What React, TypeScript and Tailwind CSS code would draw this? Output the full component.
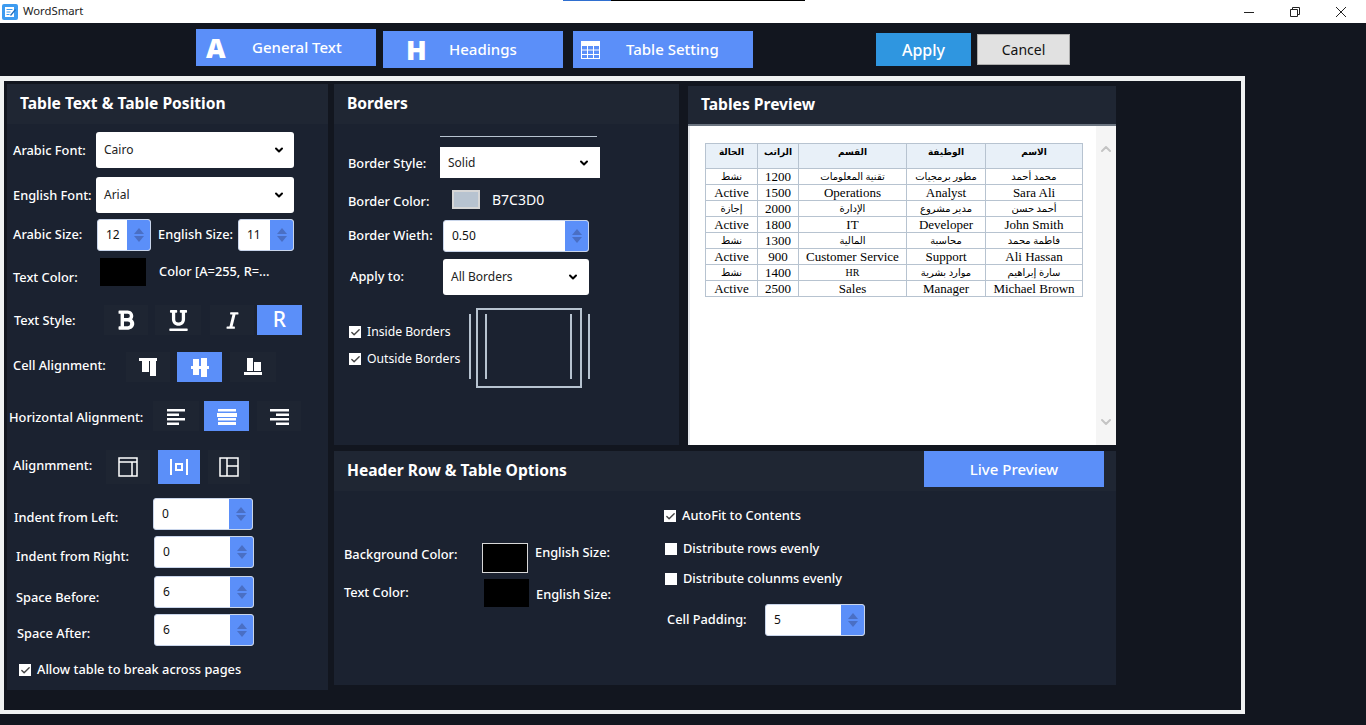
import type { ReactNode } from "react";
import { Check, ChevronDown, ChevronUp } from "lucide-react";
import { FaBold, FaItalic, FaUnderline } from "react-icons/fa";

const ROWS = [
  ["نشط", "1200", "تقنية المعلومات", "مطور برمجيات", "محمد أحمد"],
  ["Active", "1500", "Operations", "Analyst", "Sara Ali"],
  ["إجازة", "2000", "الإدارة", "مدير مشروع", "أحمد حسن"],
  ["Active", "1800", "IT", "Developer", "John Smith"],
  ["نشط", "1300", "المالية", "محاسبة", "فاطمة محمد"],
  ["Active", "900", "Customer Service", "Support", "Ali Hassan"],
  ["نشط", "1400", "HR", "موارد بشرية", "سارة إبراهيم"],
  ["Active", "2500", "Sales", "Manager", "Michael Brown"],
];

const HEAD = ["الحالة", "الراتب", "القسم", "الوظيفة", "الاسم"];

function Spin({ value, className }: { value: string; className: string }) {
  return (
    <div className={`flex h-[32px] overflow-hidden rounded-[3px] border border-[#c9d5ea] bg-white text-[12px] font-normal text-[#111] ${className}`}>
      <span className="flex-1 pl-[8px] pt-[6px]">{value}</span>
      <span className="flex w-[23px] flex-col items-center justify-center gap-[2px] bg-[#5b8ff9]">
        <span className="h-0 w-0 border-x-[5px] border-b-[6px] border-x-transparent border-b-[#4a6fc4]" />
        <span className="h-0 w-0 border-x-[5px] border-t-[6px] border-x-transparent border-t-[#4a6fc4]" />
      </span>
    </div>
  );
}

function Select({ value, className }: { value: string; className: string }) {
  return (
    <div className={`flex items-center justify-between bg-white text-[12px] font-normal text-[#222] ${className}`}>
      <span>{value}</span>
      <ChevronDown size={12} strokeWidth={4} className="text-black" />
    </div>
  );
}

function Box({ checked }: { checked?: boolean }) {
  return (
    <span className="flex h-[12px] w-[12px] shrink-0 items-center justify-center bg-white">
      {checked && <Check size={11} strokeWidth={3} className="text-[#444]" />}
    </span>
  );
}

function Tool({ active, className, children }: { active?: boolean; className: string; children: ReactNode }) {
  return (
    <div className={`flex h-full items-center justify-center text-white ${active ? "bg-[#5b8ff9]" : "bg-[#1e2532]"} ${className}`}>
      {children}
    </div>
  );
}

function Glyph({ children, size = 20 }: { children: ReactNode; size?: number }) {
  return (
    <svg width={size} height={size} viewBox="0 0 20 20" fill="white">
      {children}
    </svg>
  );
}

function PanelHead({ title, className = "" }: { title: string; className?: string }) {
  return (
    <div className={`flex h-[40px] items-center bg-[#1f2633] text-[15.6px] font-bold text-white ${className}`}>{title}</div>
  );
}

export default function App() {
  return (
    <div
      className="relative h-[725px] w-[1366px] overflow-hidden bg-[#12161f] text-[12.8px] font-medium text-white"
      style={{ fontFamily: '"Noto Sans", "Open Sans", "DejaVu Sans", sans-serif' }}
    >
      <div className="absolute left-[563px] top-0 flex h-[1px] w-[242px]">
        <span className="w-[48px] bg-[#2f6fd0]" />
        <span className="flex-1 bg-black" />
      </div>

      {/* Title bar */}
      <div className="flex h-[23px] items-center bg-white pl-[2px] text-[11.3px] font-normal text-[#222]">
        <svg width="16" height="16" viewBox="0 0 16 16">
          <rect width="16" height="16" rx="2" fill="#3d9bf0" />
          <rect x="3" y="3" width="9" height="10" fill="white" />
          <path d="M4.5 5.5h6M4.5 8h4M4.5 10.500h3" stroke="#3d9bf0" strokeWidth="1" />
          <path d="M8 11l5-6 1 1-5 6z" fill="#1f6fc0" />
        </svg>
        <span className="ml-[5px]">WordSmart</span>
        <div className="ml-auto flex items-center pr-[20px]">
          <svg width="10" height="10" viewBox="0 0 10 10" stroke="#222" fill="none">
            <path d="M0 5.500h10" />
          </svg>
          <svg className="ml-[36px]" width="10" height="10" viewBox="0 0 10 10" stroke="#222" fill="none">
            <path d="M.5 2.500h7v7h-7zM2.500 2.500v-2h7v7h-2" />
          </svg>
          <svg className="ml-[36px]" width="10" height="10" viewBox="0 0 10 10" stroke="#222" fill="none">
            <path d="M0 0l10 10M10 0L0 10" />
          </svg>
        </div>
      </div>

      {/* Tabs */}
      <div className="flex h-[53px] items-start pl-[196px] text-[15px]">
        <div className="mt-[6px] flex h-[37px] w-[180px] items-center bg-[#5b8ff9]">
          <span className="ml-[10px] w-[46px] text-[27px] font-black leading-none">A</span>
          <span>General Text</span>
        </div>
        <div className="ml-[7px] mt-[8px] flex h-[37px] w-[180px] items-center bg-[#5b8ff9]">
          <span className="ml-[23px] w-[43px] text-[27px] font-black leading-none">H</span>
          <span>Headings</span>
        </div>
        <div className="ml-[10px] mt-[8px] flex h-[37px] w-[180px] items-center bg-[#5b8ff9]">
          <svg className="ml-[8px]" width="19" height="18" viewBox="0 0 19 18" fill="none" stroke="white">
            <rect x=".5" y=".5" width="18" height="17" fill="#5b8ff9" />
            <rect x=".5" y=".5" width="18" height="4" fill="white" />
            <path d="M6.500 4v14M12.500 4v14M0 9h19M0 13.500h19" />
          </svg>
          <span className="ml-[26px]">Table Setting</span>
        </div>
        <div className="ml-[123px] mt-[10px] flex h-[33px] w-[95px] items-center justify-center bg-[#2f96e0] text-[16px]">Apply</div>
        <div className="ml-[6px] mt-[11px] flex h-[31px] w-[93px] items-center justify-center border border-[#adadad] bg-[#e1e1e1] text-[14px] font-normal text-[#111]">Cancel</div>
      </div>

      {/* Frame */}
      <div className="h-[638px] w-[1245px] border-x-[4px] border-b-[4px] border-t-[5px] border-[#f0f2f2] pl-[3px] pt-[3px]">
        <div className="flex gap-[6px]">
          {/* Table text panel */}
          <div className="h-[606px] w-[321px] bg-[#1b2230]">
            <PanelHead title="Table Text & Table Position" className="pl-[13px]" />
            <div className="mt-[8px] flex h-[36px] items-center pl-[6px]">
              <span className="w-[83px] pt-[2px]">Arabic Font:</span>
              <Select value="Cairo" className="h-full w-[198px] rounded-[3px] pl-[8px] pr-[9px] pb-[1px]" />
            </div>
            <div className="mt-[9px] flex h-[36px] items-center pl-[6px]">
              <span className="w-[83px] pt-[2px]">English Font:</span>
              <Select value="Arial" className="h-full w-[198px] rounded-[3px] pl-[8px] pr-[9px] pb-[1px]" />
            </div>
            <div className="mt-[6px] flex h-[32px] items-center whitespace-nowrap pl-[6px]">
              <span className="w-[84px]">Arabic Size:</span>
              <Spin value="12" className="w-[54px]" />
              <span className="ml-[7px] w-[80px]">English Size:</span>
              <Spin value="11" className="w-[56px]" />
            </div>
            <div className="mt-[7px] flex h-[28px] items-center pl-[6px]">
              <span className="w-[87px] pt-[12px]">Text Color:</span>
              <span className="h-full w-[46px] bg-black" />
              <span className="ml-[13px]">Color [A=255, R=...</span>
            </div>
            <div className="mt-[19px] flex h-[30px] items-center pl-[7px]">
              <span className="w-[90px] pt-[2px]">Text Style:</span>
              <Tool className="w-[44px]"><FaBold size={22} /></Tool>
              <Tool className="ml-[7px] w-[46px]"><FaUnderline size={21} /></Tool>
              <Tool className="ml-[9px] w-[44px]"><FaItalic size={19} /></Tool>
              <Tool active className="ml-[3px] w-[45px]"><span className="text-[21px]">R</span></Tool>
            </div>
            <div className="mt-[17px] flex h-[30px] items-center pl-[6px]">
              <span className="w-[113px] pb-[2px]">Cell Alignment:</span>
              <Tool className="w-[44px]">
                <Glyph><path d="M1 1h18v3h-1v15h-6V4h-1v11H4V4H1z" /></Glyph>
              </Tool>
              <Tool active className="ml-[7px] w-[45px]">
                <Glyph><path d="M3 2h6v7h2V1h6v8h2v3h-2v8h-6v-8H9v6H3v-6H1V9h2z" /></Glyph>
              </Tool>
              <Tool className="ml-[8px] w-[46px]">
                <Glyph><path d="M4 1h6v13H4zM11 5h7v9h-7zM1 15h18v3H1z" /></Glyph>
              </Tool>
            </div>
            <div className="mt-[19px] flex h-[30px] items-center pl-[2px]">
              <span className="w-[144px] pt-[4px]">Horizontal Alignment:</span>
              <Tool className="w-[46px]">
                <Glyph><path d="M1 3h18v2.500H1zM1 7.500h12V10H1zM1 12h18v2.500H1zM1 16.500h12V19H1z" /></Glyph>
              </Tool>
              <Tool active className="ml-[5px] w-[45px]">
                <Glyph><path d="M1 3h18v2.500H1zM0 7h20v4H0zM1 12h18v2.500H1zM1 16h18v3H1z" /></Glyph>
              </Tool>
              <Tool className="ml-[8px] w-[44px]">
                <Glyph><path d="M1 3h19v2.500H1zM7 7.500h13V10H7zM1 12h19v2.500H1zM7 16.500h13V19H7z" /></Glyph>
              </Tool>
            </div>
            <div className="mt-[19px] flex h-[34px] items-center pl-[6px]">
              <span className="w-[93px] pb-[3px]">Alignmment:</span>
              <Tool className="w-[44px]">
                <svg width="20" height="20" viewBox="0 0 20 20" fill="none" stroke="white" strokeWidth="1.500"><path d="M1 1h18v18H1zM1 5h18M14 5v14" /></svg>
              </Tool>
              <Tool active className="ml-[8px] w-[42px]">
                <svg width="20" height="20" viewBox="0 0 20 20" fill="none" stroke="white" strokeWidth="2"><path d="M2 2v16M18 2v16" /><rect x="7" y="7" width="6" height="6" /></svg>
              </Tool>
              <Tool className="ml-[8px] w-[42px]">
                <svg width="20" height="20" viewBox="0 0 20 20" fill="none" stroke="white" strokeWidth="1.500"><path d="M1 1h18v18H1zM8 1v18M8 9h11" /></svg>
              </Tool>
            </div>
            <div className="mt-[14px] flex h-[32px] items-center pl-[7px]">
              <span className="w-[139px] pt-[7px]">Indent from Left:</span>
              <Spin value="0" className="w-[100px]" />
            </div>
            <div className="mt-[6px] flex h-[32px] items-center pl-[9px]">
              <span className="w-[138px] pt-[10px]">Indent from Right:</span>
              <Spin value="0" className="w-[100px]" />
            </div>
            <div className="mt-[8px] flex h-[32px] items-center pl-[9px]">
              <span className="w-[138px] pt-[12px]">Space Before:</span>
              <Spin value="6" className="w-[100px]" />
            </div>
            <div className="mt-[6px] flex h-[32px] items-center pl-[10px]">
              <span className="w-[137px] pt-[8px]">Space After:</span>
              <Spin value="6" className="w-[100px]" />
            </div>
            <div className="mt-[15px] flex h-[18px] items-center gap-[6px] pl-[12px]">
              <Box checked />
              <span>Allow table to break across pages</span>
            </div>
          </div>

          <div className="w-[782px]">
            <div className="flex h-[361px] items-start">
              {/* Borders panel */}
              <div className="h-full w-[345px] bg-[#1b2230]">
                <PanelHead title="Borders" className="pl-[13px] font-bold" />
                <div className="ml-[106px] mt-[12px] h-[1px] w-[157px] bg-[#b7c3d0]" />
                <div className="mt-[10px] flex h-[31px] items-center pl-[14px]">
                  <span className="w-[92px] pt-[2px]">Border Style:</span>
                  <Select value="Solid" className="h-full w-[160px] pl-[8px] pr-[10px]" />
                </div>
                <div className="mt-[12px] flex h-[19px] items-center pl-[14px]">
                  <span className="w-[104px] pt-[4px]">Border Color:</span>
                  <span className="h-full w-[28px] border-2 border-[#d6d6d6] bg-[#b7c3d0]" />
                  <span className="ml-[12px] text-[14px] font-normal">B7C3D0</span>
                </div>
                <div className="mt-[11px] flex h-[32px] items-center pl-[14px]">
                  <span className="w-[95px]">Border Wieth:</span>
                  <Spin value="0.50" className="w-[146px]" />
                </div>
                <div className="mt-[7px] flex h-[36px] items-center pl-[16px]">
                  <span className="w-[93px]">Apply to:</span>
                  <Select value="All Borders" className="h-full w-[146px] rounded-[3px] pl-[8px] pr-[10px]" />
                </div>
                <div className="mt-[11px] flex pl-[15px]">
                  <div className="w-[119px] pt-[18px] text-[12.2px] font-normal">
                    <div className="flex h-[16px] items-center gap-[6px]"><Box checked />Inside Borders</div>
                    <div className="mt-[11px] flex h-[16px] items-center gap-[6px]"><Box checked />Outside Borders</div>
                  </div>
                  <svg width="124" height="84" viewBox="0 0 124 84" fill="none" stroke="#b7c3d0" strokeWidth="2">
                    <rect x="9" y="3" width="104" height="78" />
                    <path d="M2 8v65M18 8v65M103 8v65M121 8v65" />
                  </svg>
                </div>
              </div>

              {/* Preview panel */}
              <div className="ml-[9px] mt-[2px] h-[359px] w-[428px]">
                <div className="flex h-[40px] items-center border-b-2 border-[#6b7480] bg-[#1f2633] pl-[13px] text-[15.6px] font-bold">Tables Preview</div>
                <div className="flex h-[319px] border-l-2 border-[#e5e8ec] bg-white">
                  <div className="flex-1 pl-[15px] pt-[17px]">
                    <table
                      className="w-[377px] table-fixed border-collapse text-center text-[13px] font-normal leading-[15px] text-black"
                      style={{ fontFamily: '"Liberation Serif", "DejaVu Sans", serif' }}
                    >
                      <colgroup>
                        <col className="w-[52px]" />
                        <col className="w-[41px]" />
                        <col className="w-[108px]" />
                        <col className="w-[79px]" />
                        <col className="w-[97px]" />
                      </colgroup>
                      <thead>
                        <tr className="h-[25px] bg-[#e8f0f8]">
                          {HEAD.map((h) => (
                            <th key={h} className="border border-[#b7c3d0] pb-[7px] text-[9px] font-bold">{h}</th>
                          ))}
                        </tr>
                      </thead>
                      <tbody>
                        {ROWS.map((r, i) => (
                          <tr key={i} className="h-[16px]">
                            {r.map((c, j) => (
                              <td key={j} className={`border border-[#b7c3d0] p-0 whitespace-nowrap ${i % 2 === 0 && j !== 1 ? "text-[10px]" : ""}`}>{c}</td>
                            ))}
                          </tr>
                        ))}
                      </tbody>
                    </table>
                  </div>
                  <div className="flex w-[20px] flex-col items-center justify-between bg-[#f5f5f5] py-[15px] text-[#c4c4c4]">
                    <ChevronUp size={16} strokeWidth={3} />
                    <ChevronDown size={16} strokeWidth={3} />
                  </div>
                </div>
              </div>
            </div>

            {/* Header row options */}
            <div className="mt-[6px] h-[234px] bg-[#1b2230]">
              <div className="flex h-[40px] items-start bg-[#1f2633] pl-[13px] pt-[8px] text-[15.6px] font-bold">
                <span>Header Row & Table Options</span>
                <div className="ml-auto -mt-[8px] mr-[12px] flex h-[36px] w-[180px] items-center justify-center bg-[#5b8ff9] text-[15px] font-medium">Live Preview</div>
              </div>
              <div className="flex">
                <div className="w-[330px] pl-[10px] pt-[52px]">
                  <div className="flex h-[30px] items-center">
                    <span className="w-[138px] pb-[6px]">Background Color:</span>
                    <span className="h-full w-[46px] border border-[#d8d8d8] bg-black" />
                    <span className="ml-[7px] pb-[11px]">English Size:</span>
                  </div>
                  <div className="mt-[6px] flex h-[28px] items-center">
                    <span className="w-[140px]">Text Color:</span>
                    <span className="h-full w-[45px] bg-black" />
                    <span className="ml-[7px] pt-[4px]">English Size:</span>
                  </div>
                </div>
                <div className="pt-[18px]">
                  <div className="flex h-[14px] items-center gap-[6px]"><Box checked />AutoFit to Contents</div>
                  <div className="mt-[19px] flex h-[14px] items-center gap-[6px] pl-[1px]"><Box />Distribute rows evenly</div>
                  <div className="mt-[16px] flex h-[14px] items-center gap-[6px] pl-[1px]"><Box />Distribute colunms evenly</div>
                  <div className="mt-[18px] flex h-[32px] items-center pl-[3px]">
                    <span className="w-[98px]">Cell Padding:</span>
                    <Spin value="5" className="w-[100px]" />
                  </div>
                </div>
              </div>
            </div>
          </div>
        </div>
      </div>
    </div>
  );
}
